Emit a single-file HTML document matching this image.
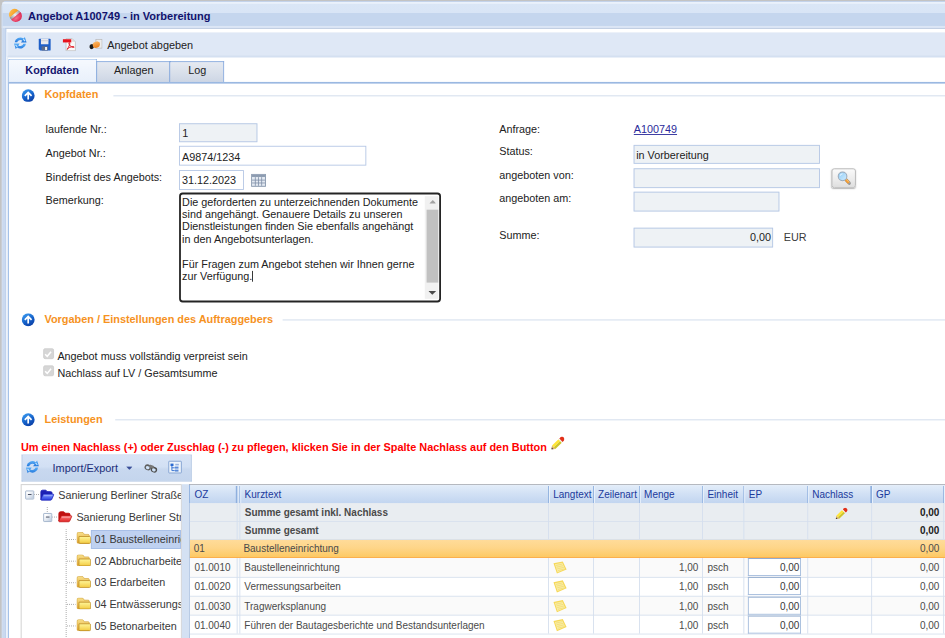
<!DOCTYPE html>
<html lang="de">
<head>
<meta charset="utf-8">
<title>Angebot A100749 - in Vorbereitung</title>
<style>
*{box-sizing:border-box;margin:0;padding:0}
html,body{width:945px;height:638px;overflow:hidden;background:#c3c3c3}
body{font-family:"Liberation Sans",Arial,sans-serif;font-size:12px;color:#222}
#stage{position:absolute;left:0;top:0;width:1050px;height:708.88px;transform:scale(.9);transform-origin:0 0;overflow:hidden;background:#c3c3c3}
.a{position:absolute}
.t{white-space:nowrap;color:#222}
.b{font-weight:bold}
.or{color:#f6921e;font-weight:bold}
.inp{border:1px solid #b5c7e5;background:#fff}
.ro{background:#eef2f5}
.hd{color:#1b3a9c}
.g{color:#4a4a4a}
.vl{background:#d5dfee}
</style>
</head>
<body>
<div id="stage">
<svg width="0" height="0" style="position:absolute"><defs>
<radialGradient id="gr" cx="40%" cy="35%" r="70%"><stop offset="0" stop-color="#f6708a"/><stop offset="1" stop-color="#d81c48"/></radialGradient>
<linearGradient id="go" x1="0" y1="0" x2="1" y2="1"><stop offset="0" stop-color="#ffc35a"/><stop offset="1" stop-color="#f39a1c"/></linearGradient>
<linearGradient id="gs" x1="0" y1="0" x2="1" y2="0"><stop offset="0" stop-color="#8c8c8c"/><stop offset=".5" stop-color="#eeeeee"/><stop offset="1" stop-color="#9a9a9a"/></linearGradient>
<linearGradient id="gb" x1="0.2" y1="0" x2="0.8" y2="1"><stop offset="0" stop-color="#3a9af0"/><stop offset=".55" stop-color="#1560c8"/><stop offset="1" stop-color="#0a3aa0"/></linearGradient>
<linearGradient id="gf" x1="0" y1="0" x2="0" y2="1"><stop offset="0" stop-color="#fff69a"/><stop offset="1" stop-color="#f3cb42"/></linearGradient>
<linearGradient id="gfb" x1="0" y1="0" x2="0" y2="1"><stop offset="0" stop-color="#7a96ff"/><stop offset="1" stop-color="#2a3ee0"/></linearGradient>
<linearGradient id="gfr" x1="0" y1="0" x2="0" y2="1"><stop offset="0" stop-color="#ff8080"/><stop offset="1" stop-color="#e02424"/></linearGradient>
<linearGradient id="grf" x1="0" y1="0" x2="0" y2="1"><stop offset="0" stop-color="#5cb0f8"/><stop offset="1" stop-color="#2478dc"/></linearGradient>
<linearGradient id="gh" x1="0" y1="0" x2="0.3" y2="1"><stop offset="0" stop-color="#ffc070"/><stop offset="1" stop-color="#ee8420"/></linearGradient>
<linearGradient id="gl" x1="0" y1="0" x2="1" y2="1"><stop offset="0" stop-color="#8ccaf6"/><stop offset="1" stop-color="#d4eeff"/></linearGradient>
<linearGradient id="gfk" x1="0" y1="0" x2="0" y2="1"><stop offset="0" stop-color="#f8e08a"/><stop offset="1" stop-color="#e4a93a"/></linearGradient>
<g id="arrow"><circle cx="8" cy="8" r="7.8" fill="url(#gb)"/><path d="M8 12.6 V4.2 M3.9 8.2 L8 4 L12.1 8.2" stroke="#fff" stroke-width="2.1" fill="none" stroke-linejoin="miter"/></g>
<g id="refresh"><path d="M1.4 7.2 A6.6 6.2 0 0 1 11.8 2.6 L13.4 .8 L15.4 7.4 H8.8 L10.4 5 A3.9 3.5 0 0 0 4.4 7.2 Z" fill="url(#grf)"/><path d="M14.6 8.8 A6.6 6.2 0 0 1 4.2 13.4 L2.6 15.2 L.6 8.6 H7.2 L5.6 11 A3.9 3.5 0 0 0 11.6 8.8 Z" fill="url(#grf)"/><path d="M11.6 3.4 L13.6 5.8 M2.4 10.2 L4.4 12.6" stroke="#c4e6ff" stroke-width="1.3"/></g>
<g id="folder"><path d="M.4 2.3 Q.4 .4 2.1 .4 H5.5 Q6.6 .4 7.1 1.4 L7.7 2.5 H11.6 Q12.8 2.5 12.8 3.8 V10.4 Q12.8 11.3 11.9 11.3 H1.6 Q.4 11.3 .4 10 Z" fill="url(#gfk)" stroke="#cf9e34" stroke-width=".6"/><path d="M2.5 4.6 H13.1 Q14.1 4.6 14.1 5.6 V10.4 Q14.1 11.5 13 11.5 H3.5 Q2.4 11.5 2.4 10.4 Z" fill="url(#gf)" stroke="#b8861e" stroke-width=".75"/></g>
<g id="note"><path d="M.9 2.6 L10.2 .7 L14 8.7 L4.3 12.9 Z" fill="#f6d858"/><path d="M2.3 3.6 L9.6 2.1 L12.5 8.3 L5 11.5 Z" fill="#f9eda6"/><path d="M3.2 4.8 L9.6 3.4 M3.9 6.5 L10.5 5 M4.6 8.2 L11.3 6.6 M5.3 9.9 L12 8.2" stroke="#f3dc72" stroke-width=".8" fill="none"/></g>
<g id="pencil"><g transform="translate(.8 15.1) rotate(-44)"><path d="M0 0 L3.6 -2.8 V2.8 Z" fill="#dcae68"/><path d="M0 0 L1.8 -1.4 V1.4 Z" fill="#3a3a3a"/><rect x="3.6" y="-2.8" width="10.6" height="3" fill="#ffe536"/><rect x="3.6" y=".2" width="10.6" height="2.6" fill="#cfc52a"/><rect x="14.2" y="-2.8" width="1.3" height="5.6" fill="#f4f4f4"/><path d="M15.5 -2.8 H17.4 Q20 -2.8 20 0 Q20 2.8 17.4 2.8 H15.5 Z" fill="#e2301a"/></g></g>
</defs></svg>
<div class="a " style="left:1.78px;top:1.44px;width:1064.89px;height:731.89px;background:#cad9ef;border-radius:5px 0 0 0"></div>
<div class="a " style="left:1.78px;top:1.44px;width:1064.89px;height:29.44px;border-radius:5px 0 0 0;background:linear-gradient(#bccde8 0,#c4d4ec 2.6%,#eaf1fb 4.8%,#eaf1fb 9%,#dae6f6 12%,#d9e5f6 43.4%,#c5d6ee 46.6%,#c5d6ee 91%,#dce6f5 93.4%,#dce6f5 100%)"></div>
<div class="a " style="left:1.78px;top:6.67px;width:1.56px;height:726.67px;background:linear-gradient(90deg,#dbe6f5,#cfdcf0)"></div>
<svg class="a" style="left:8.89px;top:8.67px;" width="16.0" height="16.0" viewBox="0 0 16 16"><g transform="rotate(-40 8 8)"><path d="M1.9 6 A6.1 5.4 0 0 1 14.1 6 Z" fill="url(#go)"/><path d="M1.6 6 H14.4 Q15 7.6 14.4 9.2 H1.6 Q1 7.6 1.6 6 Z" fill="url(#gs)"/><path d="M1.2 8.8 A6.8 6.9 0 0 0 14.8 8.8 Z" fill="url(#gr)"/></g></svg>
<div class="a t b" style="left:31.11px;top:11.111px;font-size:12.25px;line-height:14px;color:#12126c">Angebot A100749 - in Vorbereitung</div>
<div class="a " style="left:6.44px;top:30.78px;width:1060.22px;height:702.56px;background:#fff;border:1px solid #a3bfe4;border-top-color:#b3c4dd"></div>
<div class="a " style="left:8.33px;top:35.56px;width:1058.33px;height:27.33px;background:#dfe8f6;border-bottom:1px solid #c8d7ec;border-left:1px solid #e6eefa"></div>
<svg class="a" style="left:14.67px;top:40.44px;" width="15.11" height="15.56" viewBox="0 0 16 16"><use href="#refresh"/></svg>
<svg class="a" style="left:42.44px;top:41.56px;" width="15.33" height="15.11" viewBox="0 0 16 16"><path d="M1 2 Q1 1 2 1 H14 Q15 1 15 2 V14 Q15 15 14 15 H2.6 L1 13.4 Z" fill="#1f5fc8"/><rect x="3.6" y="1" width="8.8" height="6.6" fill="#e9e9ee"/><rect x="3.6" y="3" width="8.8" height="1" fill="#c8c8d0"/><rect x="4.4" y="10" width="7.4" height="5" fill="#5a6a8a"/><rect x="8.4" y="10.8" width="2.4" height="3.6" fill="#f2f2f2"/></svg>
<svg class="a" style="left:68.89px;top:42.44px;" width="16.67" height="14.89" viewBox="0 0 16 15"><path d="M4 1 H11 L14.5 4.5 V14.5 H4 Z" fill="#fafafa" stroke="#b8b8b8" stroke-width=".8"/><path d="M11 1 V4.5 H14.5 Z" fill="#d8d8d8"/><rect x=".5" y="1.6" width="9.4" height="3.6" fill="#e8121c"/><path d="M5.2 13 C7 10.5 8.4 7.6 8.2 6 C8 4.8 7 5.2 7.2 6.4 C7.6 8.6 10 10.6 12.4 10.8 C13.6 10.9 13.4 9.8 12 9.8 C9.6 9.8 6.6 11.2 5.2 13 Z" fill="none" stroke="#e0202a" stroke-width="1.1"/></svg>
<svg class="a" style="left:98.89px;top:43.11px;" width="15.11" height="12.28" viewBox="0 0 16 13"><rect x="8" y=".7" width="7.2" height="10.4" fill="#ececec" stroke="#b4b4b4" stroke-width=".8"/><path d="M.5 9.2 Q.3 7 2.4 6.6 L4.6 6.3 L5.6 10.6 L3.4 12.3 Q1.2 12.6 .5 10.4 Z" fill="#1c1c1c"/><path d="M4 6.6 Q5 3.6 8 3.6 Q9.4 2.6 10.8 3.6 Q13.2 4 12.8 6.8 Q12.6 9.6 10 10.4 Q7 11.4 5 10.2 Z" fill="url(#gh)"/></svg>
<div class="a t " style="left:119.11px;top:43.333px;font-size:12.1px;line-height:14px;">Angebot abgeben</div>
<div class="a " style="left:8.33px;top:62.78px;width:1058.33px;height:1.67px;background:#dbe5f4"></div>
<div class="a " style="left:8.78px;top:65.11px;width:98.78px;height:27.33px;border:1px solid #8db2e3;border-bottom:none;border-radius:2px 2px 0 0;background:linear-gradient(#f6f9fe,#e8f0fb)"></div>
<div class="a t b" style="left:0.0px;top:71.111px;font-size:12px;line-height:14px;left:8.78px;width:98.11px;text-align:center;color:#15156f">Kopfdaten</div>
<div class="a " style="left:107.33px;top:67.56px;width:82.22px;height:24.44px;border:1.3px solid #86a9dc;border-bottom:none;background:linear-gradient(#e6eaf1,#d8dfea 55%,#ccd5e4)"></div>
<div class="a t " style="left:0.0px;top:71.111px;font-size:12px;line-height:14px;left:107.67px;width:81.89px;text-align:center">Anlagen</div>
<div class="a " style="left:188.44px;top:67.56px;width:60.33px;height:24.44px;border:1.3px solid #86a9dc;border-bottom:none;background:linear-gradient(#e6eaf1,#d8dfea 55%,#ccd5e4)"></div>
<div class="a t " style="left:0.0px;top:71.111px;font-size:12px;line-height:14px;left:189.67px;width:59.0px;text-align:center">Log</div>
<div class="a " style="left:8.78px;top:91.0px;width:1057.89px;height:2.33px;background:linear-gradient(#b6cbea,#8dafdd 50%,#adc4e6)"></div>
<div class="a " style="left:8.78px;top:92.22px;width:1.06px;height:641.11px;background:#94b6e4"></div>
<div class="a " style="left:6.89px;top:62.89px;width:1.89px;height:670.44px;background:linear-gradient(90deg,#f4f7fc,#dde7f5)"></div>
<div class="a " style="left:125.56px;top:105.56px;width:941.11px;height:1.06px;background:#cdd9ea"></div>
<svg class="a" style="left:24.11px;top:98.67px;" width="14.67" height="14.67" viewBox="0 0 16 16"><use href="#arrow"/></svg>
<div class="a t or" style="left:49.44px;top:97.778px;font-size:12.1px;line-height:14px;">Kopfdaten</div>
<div class="a " style="left:314.0px;top:354.89px;width:752.67px;height:1.06px;background:#cdd9ea"></div>
<svg class="a" style="left:24.11px;top:348.0px;" width="14.67" height="14.67" viewBox="0 0 16 16"><use href="#arrow"/></svg>
<div class="a t or" style="left:49.44px;top:347.778px;font-size:12.1px;line-height:14px;">Vorgaben / Einstellungen des Auftraggebers</div>
<div class="a " style="left:128.33px;top:466.33px;width:938.33px;height:1.06px;background:#cdd9ea"></div>
<svg class="a" style="left:24.11px;top:459.44px;" width="14.67" height="14.67" viewBox="0 0 16 16"><use href="#arrow"/></svg>
<div class="a t or" style="left:49.44px;top:458.889px;font-size:12.1px;line-height:14px;">Leistungen</div>
<div class="a t " style="left:50.67px;top:136.667px;font-size:12px;line-height:14px;">laufende Nr.:</div>
<div class="a t " style="left:50.67px;top:163.333px;font-size:12px;line-height:14px;">Angebot Nr.:</div>
<div class="a t " style="left:50.67px;top:190.0px;font-size:12px;line-height:14px;">Bindefrist des Angebots:</div>
<div class="a t " style="left:50.67px;top:215.556px;font-size:12px;line-height:14px;">Bemerkung:</div>
<div class="a inp ro" style="left:198.89px;top:136.56px;width:87.33px;height:21.78px;"></div>
<div class="a t " style="left:202.44px;top:141.111px;font-size:12px;line-height:14px;">1</div>
<div class="a inp" style="left:198.89px;top:162.33px;width:208.0px;height:22.11px;"></div>
<div class="a t " style="left:202.22px;top:167.778px;font-size:12px;line-height:14px;">A9874/1234</div>
<div class="a inp" style="left:198.89px;top:188.78px;width:72.22px;height:22.0px;"></div>
<div class="a t " style="left:202.22px;top:193.333px;font-size:12px;line-height:14px;">31.12.2023</div>
<svg class="a" style="left:279.11px;top:192.89px;" width="16.44" height="14.67" viewBox="0 0 16 14"><rect x=".5" y=".5" width="15" height="13" fill="#e4eaf2" stroke="#8696ac" stroke-width="1"/><rect x="1" y="1" width="14" height="2.4" fill="#8c9bb0"/><path d="M4.6 3.6 V13 M8 3.6 V13 M11.4 3.6 V13 M1 6.8 H15 M1 9.9 H15" stroke="#8292aa" stroke-width=".9"/></svg>
<div class="a " style="left:199.33px;top:214.39px;width:290.44px;height:121.39px;border:2.1px solid #242424;border-radius:4px;background:#fff"></div>
<div class="a t " style="left:202.33px;top:217.778px;font-size:12px;line-height:14px;">Die geforderten zu unterzeichnenden Dokumente</div>
<div class="a t " style="left:202.33px;top:231.111px;font-size:12px;line-height:14px;">sind angehängt. Genauere Details zu unseren</div>
<div class="a t " style="left:202.33px;top:244.444px;font-size:12px;line-height:14px;">Dienstleistungen finden Sie ebenfalls angehängt</div>
<div class="a t " style="left:202.33px;top:258.889px;font-size:12px;line-height:14px;">in den Angebotsunterlagen.</div>
<div class="a t " style="left:202.33px;top:286.667px;font-size:12px;line-height:14px;">Für Fragen zum Angebot stehen wir Ihnen gerne</div>
<div class="a t " style="left:202.33px;top:300.0px;font-size:12px;line-height:14px;">zur Verfügung.</div>
<div class="a " style="left:279.67px;top:300.89px;width:1.11px;height:12.0px;background:#222"></div>
<div class="a " style="left:472.0px;top:218.0px;width:15.11px;height:114.0px;background:#f1f1f1"></div>
<div class="a " style="left:473.56px;top:232.67px;width:13.0px;height:81.33px;background:#c1c1c1"></div>
<svg class="a" style="left:476.67px;top:222.44px;" width="7.78" height="4.22" viewBox="0 0 8 4.4"><path d="M0 4.2 L4 .3 L8 4.2 Z" fill="#a3a3a3"/></svg>
<svg class="a" style="left:476.44px;top:323.33px;" width="8.67" height="4.78" viewBox="0 0 8 4.4"><path d="M0 .2 L4 4.2 L8 .2 Z" fill="#4a4a4a"/></svg>
<div class="a t " style="left:554.67px;top:136.667px;font-size:12px;line-height:14px;">Anfrage:</div>
<div class="a t " style="left:554.67px;top:161.111px;font-size:12px;line-height:14px;">Status:</div>
<div class="a t " style="left:554.67px;top:187.778px;font-size:12px;line-height:14px;">angeboten von:</div>
<div class="a t " style="left:554.67px;top:213.333px;font-size:12px;line-height:14px;">angeboten am:</div>
<div class="a t " style="left:554.67px;top:254.444px;font-size:12px;line-height:14px;">Summe:</div>
<div class="a t " style="left:704.22px;top:136.667px;font-size:12px;line-height:14px;color:#2a2a9a;text-decoration:underline;text-underline-offset:.6px;text-decoration-thickness:1px">A100749</div>
<div class="a inp ro" style="left:703.56px;top:160.67px;width:207.56px;height:21.56px;"></div>
<div class="a t " style="left:706.89px;top:165.556px;font-size:12px;line-height:14px;">in Vorbereitung</div>
<div class="a inp ro" style="left:703.56px;top:186.89px;width:207.56px;height:21.78px;"></div>
<div class="a inp ro" style="left:703.56px;top:213.11px;width:162.67px;height:21.78px;"></div>
<div class="a inp ro" style="left:703.56px;top:252.67px;width:155.11px;height:22.44px;"></div>
<div class="a t " style="right:193.44px;top:256.667px;font-size:12px;line-height:14px;">0,00</div>
<div class="a t " style="left:870.89px;top:256.667px;font-size:12px;line-height:14px;color:#3a3a3a">EUR</div>
<div class="a " style="left:923.89px;top:186.67px;width:27.11px;height:22.44px;border:1px solid #b4b4b4;border-radius:3px;background:linear-gradient(#fafafa,#ebebeb 60%,#dedede);box-shadow:0 1px 1.5px rgba(0,0,0,.28)"></div>
<svg class="a" style="left:929.56px;top:189.78px;" width="16.44" height="16.44" viewBox="0 0 16 16"><path d="M9.6 9.4 L13.2 13.2" stroke="#9a9a9a" stroke-width="3.6" stroke-linecap="round"/><path d="M9.4 9.2 L12.8 12.8" stroke="#f29a2e" stroke-width="2.8" stroke-linecap="butt"/><path d="M9.8 8.8 L13.2 12.4" stroke="#ffd08a" stroke-width=".8"/><circle cx="6" cy="5.8" r="4.7" fill="url(#gl)" stroke="#9aa8b8" stroke-width="1.1"/><path d="M3.4 5 A3 3 0 0 1 6 3" stroke="#fff" stroke-width="1.1" fill="none" opacity=".8"/></svg>
<div class="a " style="left:47.56px;top:387.11px;width:12.0px;height:12.0px;background:#d6d6d6;border-radius:2px;border:1px solid #cfcfcf"></div>
<svg class="a" style="left:48.22px;top:387.78px;" width="10.67" height="10.67" viewBox="0 0 10 10"><path d="M2 5.2 L4.2 7.4 L8.2 2.6" stroke="#fff" stroke-width="1.6" fill="none"/></svg>
<div class="a t " style="left:63.78px;top:388.889px;font-size:12px;line-height:14px;">Angebot muss vollständig verpreist sein</div>
<div class="a " style="left:47.56px;top:406.22px;width:12.0px;height:12.0px;background:#d6d6d6;border-radius:2px;border:1px solid #cfcfcf"></div>
<svg class="a" style="left:48.22px;top:406.89px;" width="10.67" height="10.67" viewBox="0 0 10 10"><path d="M2 5.2 L4.2 7.4 L8.2 2.6" stroke="#fff" stroke-width="1.6" fill="none"/></svg>
<div class="a t " style="left:63.78px;top:407.778px;font-size:12px;line-height:14px;">Nachlass auf LV / Gesamtsumme</div>
<div class="a t b" style="left:23.33px;top:490.0px;font-size:12.1px;line-height:14px;color:#ff0000">Um einen Nachlass (+) oder Zuschlag (-) zu pflegen, klicken Sie in der Spalte Nachlass auf den Button</div>
<svg class="a" style="left:612.22px;top:485.11px;" width="15.11" height="15.11" viewBox="0 0 16 16"><use href="#pencil"/></svg>
<div class="a " style="left:23.56px;top:505.44px;width:189.11px;height:29.22px;border:1px solid #a9c0e0;border-top-color:#c0d2ec;background:linear-gradient(#d8e4f6,#d2e0f4 45%,#c8d8ef 55%,#c4d5ed)"></div>
<svg class="a" style="left:28.44px;top:511.33px;" width="16.0" height="15.56" viewBox="0 0 16 16"><use href="#refresh"/></svg>
<div class="a t " style="left:58.44px;top:513.333px;font-size:12.1px;line-height:14px;color:#1c2d78">Import/Export</div>
<svg class="a" style="left:139.56px;top:518.11px;" width="7.56" height="4.22" viewBox="0 0 6.8 3.8"><path d="M.2 .3 H6.6 L3.4 3.7 Z" fill="#3a4e98"/></svg>
<svg class="a" style="left:159.78px;top:512.89px;" width="15.56" height="14.22" viewBox="0 0 14 12.8"><g transform="rotate(20 7 6.4)"><ellipse cx="3.7" cy="6.8" rx="3.3" ry="2.9" fill="#5e5e5e"/><ellipse cx="10.3" cy="6.8" rx="3.3" ry="2.9" fill="#4e4e4e"/><rect x="4.6" y="3.4" width="4.8" height="3" rx="1" fill="#777"/><ellipse cx="3.7" cy="7.1" rx="1.9" ry="1.6" fill="#cfe2f8"/><ellipse cx="10.3" cy="7.1" rx="1.9" ry="1.6" fill="#cfe2f8"/></g></svg>
<div class="a " style="left:186.89px;top:512.44px;width:15.11px;height:13.78px;border:1px solid #7f9fd0;background:#eef4fb;border-radius:1px"></div>
<svg class="a" style="left:188.22px;top:513.78px;" width="12.44" height="11.11" viewBox="0 0 11 10"><rect x="1.2" y="1" width="3" height="2.4" fill="#2a6ad0"/><path d="M2.6 3.4 V8 H5.4 M2.6 5.2 H5.4" stroke="#2a6ad0" stroke-width=".9" fill="none"/><rect x="5.6" y="4" width="3.6" height="2" fill="#5a8ad8"/><rect x="5.6" y="7" width="3.6" height="2" fill="#5a8ad8"/><rect x="6" y="1.2" width="3.6" height="1.6" fill="#9ab4e0"/></svg>
<div class="a " style="left:23.22px;top:538.44px;width:178.56px;height:194.89px;border:1px solid #cdcdcd;background:#fff"></div>
<div class="a " style="left:201.78px;top:538.44px;width:8.67px;height:194.89px;background:#d4e1f3"></div>
<div class="a " style="left:101.33px;top:588.67px;width:100.0px;height:20.89px;background:#bfd1f0;border:1px solid #a5bde6"></div>
<div class="a " style="left:28.0px;top:544.89px;width:9.78px;height:9.78px;border:1px solid #9db0c8;background:linear-gradient(135deg,#fff 20%,#bccadd);border-radius:1px"></div>
<div class="a " style="left:30.89px;top:549.22px;width:4.0px;height:1.11px;background:#3a4258"></div>
<div class="a " style="left:37.78px;top:549.28px;width:6.67px;height:1.0px;background:repeating-linear-gradient(90deg,#a4a4a4 0 1.1px,transparent 1.1px 2.2px)"></div>
<div class="a " style="left:52.39px;top:563.33px;width:1.0px;height:6.22px;background:repeating-linear-gradient(#a4a4a4 0 1.1px,transparent 1.1px 2.2px)"></div>
<div class="a " style="left:48.0px;top:569.78px;width:9.78px;height:9.78px;border:1px solid #9db0c8;background:linear-gradient(135deg,#fff 20%,#bccadd);border-radius:1px"></div>
<div class="a " style="left:50.89px;top:574.11px;width:4.0px;height:1.11px;background:#3a4258"></div>
<div class="a " style="left:57.78px;top:574.17px;width:6.67px;height:1.0px;background:repeating-linear-gradient(90deg,#a4a4a4 0 1.1px,transparent 1.1px 2.2px)"></div>
<div class="a " style="left:72.61px;top:587.78px;width:1.0px;height:123.33px;background:repeating-linear-gradient(#a4a4a4 0 1.1px,transparent 1.1px 2.2px)"></div>
<svg class="a" style="left:44.0px;top:542.78px;" width="16.89" height="14.22" viewBox="0 0 16.4 13.4"><path d="M1.4 3.2 Q1.4 1.4 3.2 1.4 H6.2 Q7.2 1.4 7.6 2.2 L8 3 H12 Q13.4 3 13.4 4.4 V6 H5 L1.4 11.4 Z" fill="#1c20b4" stroke="#1c20b4" stroke-width="1" stroke-linejoin="round"/><path d="M4.6 5.6 H14.4 Q15.6 5.6 15.1 6.8 L13.2 11.2 Q12.8 12.2 11.6 12.2 H2.2 Q1 12.2 1.5 11 L3.6 6.4 Q3.9 5.6 4.6 5.6 Z" fill="url(#gfb)" stroke="#1c20b4" stroke-width=".8" stroke-linejoin="round"/><path d="M5 6.6 H14 L13.4 8 H4.4 Z" fill="#fff" opacity=".28"/></svg>
<div class="a t " style="left:64.67px;top:543.333px;font-size:12px;line-height:14px;width:136.78px;overflow:hidden;color:#383838">Sanierung Berliner Straße</div>
<svg class="a" style="left:64.22px;top:567.11px;" width="16.89" height="14.22" viewBox="0 0 16.4 13.4"><path d="M1.4 3.2 Q1.4 1.4 3.2 1.4 H6.2 Q7.2 1.4 7.6 2.2 L8 3 H12 Q13.4 3 13.4 4.4 V6 H5 L1.4 11.4 Z" fill="#c01010" stroke="#c01010" stroke-width="1" stroke-linejoin="round"/><path d="M4.6 5.6 H14.4 Q15.6 5.6 15.1 6.8 L13.2 11.2 Q12.8 12.2 11.6 12.2 H2.2 Q1 12.2 1.5 11 L3.6 6.4 Q3.9 5.6 4.6 5.6 Z" fill="url(#gfr)" stroke="#c01010" stroke-width=".8" stroke-linejoin="round"/><path d="M5 6.6 H14 L13.4 8 H4.4 Z" fill="#fff" opacity=".28"/></svg>
<div class="a t " style="left:84.89px;top:567.778px;font-size:12px;line-height:14px;width:116.56px;overflow:hidden;color:#383838">Sanierung Berliner Straße</div>
<div class="a " style="left:73.56px;top:598.5px;width:10.89px;height:1.0px;background:repeating-linear-gradient(90deg,#a4a4a4 0 1.1px,transparent 1.1px 2.2px)"></div>
<svg class="a" style="left:84.56px;top:591.44px;" width="16.11" height="13.22" viewBox="0 0 14.5 11.9"><use href="#folder"/></svg>
<div class="a t " style="left:104.89px;top:592.222px;font-size:12px;line-height:14px;width:96.56px;overflow:hidden;color:#383838">01 Baustelleneinrichtung</div>
<div class="a " style="left:73.56px;top:622.72px;width:10.89px;height:1.0px;background:repeating-linear-gradient(90deg,#a4a4a4 0 1.1px,transparent 1.1px 2.2px)"></div>
<svg class="a" style="left:84.56px;top:615.67px;" width="16.11" height="13.22" viewBox="0 0 14.5 11.9"><use href="#folder"/></svg>
<div class="a t " style="left:104.89px;top:616.667px;font-size:12px;line-height:14px;width:96.56px;overflow:hidden;color:#383838">02 Abbrucharbeiten</div>
<div class="a " style="left:73.56px;top:646.94px;width:10.89px;height:1.0px;background:repeating-linear-gradient(90deg,#a4a4a4 0 1.1px,transparent 1.1px 2.2px)"></div>
<svg class="a" style="left:84.56px;top:639.89px;" width="16.11" height="13.22" viewBox="0 0 14.5 11.9"><use href="#folder"/></svg>
<div class="a t " style="left:104.89px;top:640.0px;font-size:12px;line-height:14px;width:96.56px;overflow:hidden;color:#383838">03 Erdarbeiten</div>
<div class="a " style="left:73.56px;top:671.17px;width:10.89px;height:1.0px;background:repeating-linear-gradient(90deg,#a4a4a4 0 1.1px,transparent 1.1px 2.2px)"></div>
<svg class="a" style="left:84.56px;top:664.11px;" width="16.11" height="13.22" viewBox="0 0 14.5 11.9"><use href="#folder"/></svg>
<div class="a t " style="left:104.89px;top:664.444px;font-size:12px;line-height:14px;width:96.56px;overflow:hidden;color:#383838">04 Entwässerungsarbeiten</div>
<div class="a " style="left:73.56px;top:695.39px;width:10.89px;height:1.0px;background:repeating-linear-gradient(90deg,#a4a4a4 0 1.1px,transparent 1.1px 2.2px)"></div>
<svg class="a" style="left:84.56px;top:688.33px;" width="16.11" height="13.22" viewBox="0 0 14.5 11.9"><use href="#folder"/></svg>
<div class="a t " style="left:104.89px;top:688.889px;font-size:12px;line-height:14px;width:96.56px;overflow:hidden;color:#383838">05 Betonarbeiten</div>
<div class="a " style="left:210.44px;top:537.78px;width:856.22px;height:195.56px;background:#fff;border-left:1px solid #a9c0e0"></div>
<div class="a " style="left:210.44px;top:537.67px;width:856.22px;height:1.78px;background:linear-gradient(#a8a6a4,#a0a8b8 55%,#9db8e0)"></div>
<div class="a " style="left:210.44px;top:539.33px;width:1.11px;height:19.89px;background:#8fb0de"></div>
<div class="a " style="left:211.44px;top:539.33px;width:855.22px;height:20.67px;background:linear-gradient(#e3edf9,#d2e1f5 45%,#c3d6f0 92%,#d3e0f2)"></div>
<div class="a " style="left:262.44px;top:539.56px;width:1.22px;height:19.67px;background:#8fb0de"></div>
<div class="a " style="left:263.67px;top:539.56px;width:1.0px;height:19.67px;background:#ecf3fc"></div>
<div class="a t hd" style="left:216.0px;top:542.222px;font-size:11.1px;line-height:14px;">OZ</div>
<div class="a " style="left:266.0px;top:539.56px;width:1.22px;height:19.67px;background:#8fb0de"></div>
<div class="a " style="left:267.22px;top:539.56px;width:1.0px;height:19.67px;background:#ecf3fc"></div>
<div class="a " style="left:608.89px;top:539.56px;width:1.22px;height:19.67px;background:#8fb0de"></div>
<div class="a " style="left:610.11px;top:539.56px;width:1.0px;height:19.67px;background:#ecf3fc"></div>
<div class="a t hd" style="left:271.78px;top:542.222px;font-size:11.1px;line-height:14px;">Kurztext</div>
<div class="a " style="left:658.78px;top:539.56px;width:1.22px;height:19.67px;background:#8fb0de"></div>
<div class="a " style="left:660.0px;top:539.56px;width:1.0px;height:19.67px;background:#ecf3fc"></div>
<div class="a t hd" style="left:614.67px;top:542.222px;font-size:11.1px;line-height:14px;">Langtext</div>
<div class="a " style="left:709.89px;top:539.56px;width:1.22px;height:19.67px;background:#8fb0de"></div>
<div class="a " style="left:711.11px;top:539.56px;width:1.0px;height:19.67px;background:#ecf3fc"></div>
<div class="a t hd" style="left:664.56px;top:542.222px;font-size:11.1px;line-height:14px;">Zeilenart</div>
<div class="a " style="left:780.22px;top:539.56px;width:1.22px;height:19.67px;background:#8fb0de"></div>
<div class="a " style="left:781.44px;top:539.56px;width:1.0px;height:19.67px;background:#ecf3fc"></div>
<div class="a t hd" style="left:715.67px;top:542.222px;font-size:11.1px;line-height:14px;">Menge</div>
<div class="a " style="left:826.22px;top:539.56px;width:1.22px;height:19.67px;background:#8fb0de"></div>
<div class="a " style="left:827.44px;top:539.56px;width:1.0px;height:19.67px;background:#ecf3fc"></div>
<div class="a t hd" style="left:786.0px;top:542.222px;font-size:11.1px;line-height:14px;">Einheit</div>
<div class="a " style="left:896.78px;top:539.56px;width:1.22px;height:19.67px;background:#8fb0de"></div>
<div class="a " style="left:898.0px;top:539.56px;width:1.0px;height:19.67px;background:#ecf3fc"></div>
<div class="a t hd" style="left:832.0px;top:542.222px;font-size:11.1px;line-height:14px;">EP</div>
<div class="a " style="left:967.44px;top:539.56px;width:1.22px;height:19.67px;background:#8fb0de"></div>
<div class="a " style="left:968.67px;top:539.56px;width:1.0px;height:19.67px;background:#ecf3fc"></div>
<div class="a t hd" style="left:902.56px;top:542.222px;font-size:11.1px;line-height:14px;">Nachlass</div>
<div class="a " style="left:1047.56px;top:539.56px;width:1.22px;height:19.67px;background:#8fb0de"></div>
<div class="a " style="left:1048.78px;top:539.56px;width:1.0px;height:19.67px;background:#ecf3fc"></div>
<div class="a t hd" style="left:973.22px;top:542.222px;font-size:11.1px;line-height:14px;">GP</div>
<div class="a " style="left:211.44px;top:559.22px;width:855.22px;height:40.11px;background:#e9edf1"></div>
<div class="a " style="left:211.44px;top:599.33px;width:855.22px;height:20.33px;background:linear-gradient(#ffdc9b,#fed588 50%,#fdc963);border-bottom:1px solid #fba63a"></div>
<div class="a " style="left:211.44px;top:619.67px;width:855.22px;height:21.44px;background:#fafafa"></div>
<div class="a " style="left:211.44px;top:641.11px;width:855.22px;height:21.33px;background:#fff"></div>
<div class="a " style="left:211.44px;top:662.44px;width:855.22px;height:21.11px;background:#fafafa"></div>
<div class="a " style="left:211.44px;top:683.56px;width:855.22px;height:20.89px;background:#fff"></div>
<div class="a " style="left:211.44px;top:578.78px;width:855.22px;height:1.0px;background:#d8e1ee"></div>
<div class="a " style="left:211.44px;top:598.78px;width:855.22px;height:1.0px;background:#d8e1ee"></div>
<div class="a " style="left:211.44px;top:640.56px;width:855.22px;height:1.0px;background:#d8e1ee"></div>
<div class="a " style="left:211.44px;top:661.89px;width:855.22px;height:1.0px;background:#d8e1ee"></div>
<div class="a " style="left:211.44px;top:683.0px;width:855.22px;height:1.0px;background:#d8e1ee"></div>
<div class="a " style="left:211.44px;top:703.89px;width:855.22px;height:1.0px;background:#d8e1ee"></div>
<div class="a vl" style="left:262.56px;top:559.22px;width:1.0px;height:40.11px;"></div>
<div class="a vl" style="left:262.56px;top:619.67px;width:1.0px;height:84.78px;"></div>
<div class="a vl" style="left:266.11px;top:559.22px;width:1.0px;height:40.11px;"></div>
<div class="a vl" style="left:266.11px;top:619.67px;width:1.0px;height:84.78px;"></div>
<div class="a vl" style="left:609.0px;top:559.22px;width:1.0px;height:40.11px;"></div>
<div class="a vl" style="left:609.0px;top:619.67px;width:1.0px;height:84.78px;"></div>
<div class="a vl" style="left:658.89px;top:559.22px;width:1.0px;height:40.11px;"></div>
<div class="a vl" style="left:658.89px;top:619.67px;width:1.0px;height:84.78px;"></div>
<div class="a vl" style="left:710.0px;top:559.22px;width:1.0px;height:40.11px;"></div>
<div class="a vl" style="left:710.0px;top:619.67px;width:1.0px;height:84.78px;"></div>
<div class="a vl" style="left:780.33px;top:559.22px;width:1.0px;height:40.11px;"></div>
<div class="a vl" style="left:780.33px;top:619.67px;width:1.0px;height:84.78px;"></div>
<div class="a vl" style="left:826.33px;top:559.22px;width:1.0px;height:40.11px;"></div>
<div class="a vl" style="left:826.33px;top:619.67px;width:1.0px;height:84.78px;"></div>
<div class="a vl" style="left:896.89px;top:559.22px;width:1.0px;height:40.11px;"></div>
<div class="a vl" style="left:896.89px;top:619.67px;width:1.0px;height:84.78px;"></div>
<div class="a vl" style="left:967.56px;top:559.22px;width:1.0px;height:40.11px;"></div>
<div class="a vl" style="left:967.56px;top:619.67px;width:1.0px;height:84.78px;"></div>
<div class="a vl" style="left:1047.67px;top:559.22px;width:1.0px;height:40.11px;"></div>
<div class="a vl" style="left:1047.67px;top:619.67px;width:1.0px;height:84.78px;"></div>
<div class="a t b g" style="left:272.0px;top:562.222px;font-size:11.1px;line-height:14px;">Summe gesamt inkl. Nachlass</div>
<div class="a t b g" style="left:272.0px;top:582.222px;font-size:11.1px;line-height:14px;">Summe gesamt</div>
<div class="a t b" style="right:6.22px;top:562.222px;font-size:11.1px;line-height:14px;color:#222">0,00</div>
<div class="a t b" style="right:6.22px;top:582.222px;font-size:11.1px;line-height:14px;color:#222">0,00</div>
<svg class="a" style="left:928.22px;top:563.56px;" width="13.56" height="13.56" viewBox="0 0 16 16"><use href="#pencil"/></svg>
<div class="a t g" style="left:215.33px;top:602.222px;font-size:11.1px;line-height:14px;">01</div>
<div class="a t g" style="left:270.44px;top:602.222px;font-size:11.1px;line-height:14px;">Baustelleneinrichtung</div>
<div class="a t g" style="right:6.22px;top:602.222px;font-size:11.1px;line-height:14px;">0,00</div>
<div class="a t g" style="left:216.0px;top:623.333px;font-size:11.1px;line-height:14px;">01.0010</div>
<div class="a t g" style="left:271.44px;top:623.333px;font-size:11.1px;line-height:14px;">Baustelleneinrichtung</div>
<svg class="a" style="left:614.0px;top:623.0px;" width="16.44" height="15.11" viewBox="0 0 14.8 13.6"><use href="#note"/></svg>
<div class="a t g" style="right:274.0px;top:623.333px;font-size:11.1px;line-height:14px;">1,00</div>
<div class="a t g" style="left:786.0px;top:623.333px;font-size:11.1px;line-height:14px;">psch</div>
<div class="a " style="left:831.44px;top:620.0px;width:58.89px;height:19.89px;background:#fff;border:1px solid #a4bcdc;border-top-color:#86a2c8"></div>
<div class="a t " style="right:161.78px;top:623.333px;font-size:11.1px;line-height:14px;color:#383838">0,00</div>
<div class="a t g" style="right:6.22px;top:623.333px;font-size:11.1px;line-height:14px;">0,00</div>
<div class="a t g" style="left:216.0px;top:644.444px;font-size:11.1px;line-height:14px;">01.0020</div>
<div class="a t g" style="left:271.44px;top:644.444px;font-size:11.1px;line-height:14px;">Vermessungsarbeiten</div>
<svg class="a" style="left:614.0px;top:644.44px;" width="16.44" height="15.11" viewBox="0 0 14.8 13.6"><use href="#note"/></svg>
<div class="a t g" style="right:274.0px;top:644.444px;font-size:11.1px;line-height:14px;">1,00</div>
<div class="a t g" style="left:786.0px;top:644.444px;font-size:11.1px;line-height:14px;">psch</div>
<div class="a " style="left:831.44px;top:641.44px;width:58.89px;height:19.89px;background:#fff;border:1px solid #a4bcdc;border-top-color:#86a2c8"></div>
<div class="a t " style="right:161.78px;top:644.444px;font-size:11.1px;line-height:14px;color:#383838">0,00</div>
<div class="a t g" style="right:6.22px;top:644.444px;font-size:11.1px;line-height:14px;">0,00</div>
<div class="a t g" style="left:216.0px;top:666.667px;font-size:11.1px;line-height:14px;">01.0030</div>
<div class="a t g" style="left:271.44px;top:666.667px;font-size:11.1px;line-height:14px;">Tragwerksplanung</div>
<svg class="a" style="left:614.0px;top:665.78px;" width="16.44" height="15.11" viewBox="0 0 14.8 13.6"><use href="#note"/></svg>
<div class="a t g" style="right:274.0px;top:666.667px;font-size:11.1px;line-height:14px;">1,00</div>
<div class="a t g" style="left:786.0px;top:666.667px;font-size:11.1px;line-height:14px;">psch</div>
<div class="a " style="left:831.44px;top:662.78px;width:58.89px;height:19.89px;background:#fff;border:1px solid #a4bcdc;border-top-color:#86a2c8"></div>
<div class="a t " style="right:161.78px;top:666.667px;font-size:11.1px;line-height:14px;color:#383838">0,00</div>
<div class="a t g" style="right:6.22px;top:666.667px;font-size:11.1px;line-height:14px;">0,00</div>
<div class="a t g" style="left:216.0px;top:687.778px;font-size:11.1px;line-height:14px;">01.0040</div>
<div class="a t g" style="left:271.44px;top:687.778px;font-size:11.1px;line-height:14px;">Führen der Bautagesberichte und Bestandsunterlagen</div>
<svg class="a" style="left:614.0px;top:686.89px;" width="16.44" height="15.11" viewBox="0 0 14.8 13.6"><use href="#note"/></svg>
<div class="a t g" style="right:274.0px;top:687.778px;font-size:11.1px;line-height:14px;">1,00</div>
<div class="a t g" style="left:786.0px;top:687.778px;font-size:11.1px;line-height:14px;">psch</div>
<div class="a " style="left:831.44px;top:683.89px;width:58.89px;height:19.89px;background:#fff;border:1px solid #a4bcdc;border-top-color:#86a2c8"></div>
<div class="a t " style="right:161.78px;top:687.778px;font-size:11.1px;line-height:14px;color:#383838">0,00</div>
<div class="a t g" style="right:6.22px;top:687.778px;font-size:11.1px;line-height:14px;">0,00</div>
</div>
</body>
</html>
